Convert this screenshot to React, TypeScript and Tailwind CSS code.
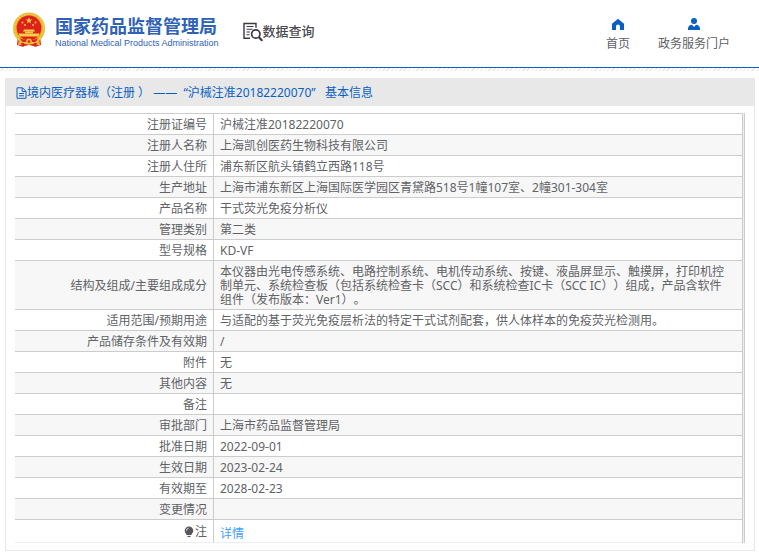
import type { ReactNode } from "react";

type Row = {
  label: ReactNode;
  value?: ReactNode;
};

const rows: Row[] = [
  { label: "注册证编号", value: "沪械注准20182220070" },
  { label: "注册人名称", value: "上海凯创医药生物科技有限公司" },
  { label: "注册人住所", value: "浦东新区航头镇鹤立西路118号" },
  {
    label: "生产地址",
    value: "上海市浦东新区上海国际医学园区青黛路518号1幢107室、2幢301-304室",
  },
  { label: "产品名称", value: "干式荧光免疫分析仪" },
  { label: "管理类别", value: "第二类" },
  { label: "型号规格", value: "KD-VF" },
  {
    label: "结构及组成/主要组成成分",
    value:
      "本仪器由光电传感系统、电路控制系统、电机传动系统、按键、液晶屏显示、触摸屏，打印机控制单元、系统检查板（包括系统检查卡（SCC）和系统检查IC卡（SCC IC））组成，产品含软件组件（发布版本：Ver1）。",
  },
  {
    label: "适用范围/预期用途",
    value: "与适配的基于荧光免疫层析法的特定干式试剂配套，供人体样本的免疫荧光检测用。",
  },
  { label: "产品储存条件及有效期", value: "/" },
  { label: "附件", value: "无" },
  { label: "其他内容", value: "无" },
  { label: "备注" },
  { label: "审批部门", value: "上海市药品监督管理局" },
  { label: "批准日期", value: "2022-09-01" },
  { label: "生效日期", value: "2023-02-24" },
  { label: "有效期至", value: "2028-02-23" },
  { label: "变更情况" },
];

function Emblem() {
  return (
    <svg viewBox="0 0 34 36" className="h-9 w-[34px] shrink-0" aria-hidden="true">
      <path d="M6 24 L5 33 L10 34.500 L17 33 L24 34.500 L29 33 L28 24 Z" fill="#d9241c" />
      <circle cx="17" cy="16.5" r="16" fill="#eab530" />
      <circle cx="17" cy="16.5" r="14.6" fill="none" stroke="#f4cb4e" strokeWidth="1.4" strokeDasharray="2 1" />
      <circle cx="17" cy="16" r="12.4" fill="#df211c" />
      <path d="M17 5.2l.9 2.3 2.4.1-1.9 1.5.7 2.4-2.1-1.4-2.1 1.4.7-2.4-1.9-1.5 2.4-.1z" fill="#f8d048" />
      <g fill="#f8d048">
        <circle cx="10.5" cy="10.5" r="0.9" />
        <circle cx="13" cy="13" r="0.9" />
        <circle cx="21" cy="13" r="0.9" />
        <circle cx="23.5" cy="10.5" r="0.9" />
        <path d="M12 17.5h10l1 2H11z" />
        <path d="M13 19.5h8v1.8h-8z" />
        <path d="M6.5 21.5h21l-1.2 3H7.7z" />
      </g>
      <path d="M8 26c5 3 13 3 18 0l-2 4H10z" fill="#df211c" />
      <circle cx="17" cy="29.5" r="3" fill="#eab530" />
      <circle cx="17" cy="29.5" r="1.2" fill="#df211c" />
      <path d="M7 27l4 3-1 3-4 0zM27 27l-4 3 1 3 4 0z" fill="#eab530" />
      <path d="M9 31l3 0 0 3.5-2 0zM22 31l3 0-1 3.5-2 0z" fill="#df211c" />
    </svg>
  );
}

function QueryIcon() {
  return (
    <svg viewBox="0 0 20 20" className="h-5 w-5 shrink-0" fill="none" stroke="#3b3847" aria-hidden="true">
      <path d="M7 16.3H1V1.500h12v4.300" strokeWidth="1.4" />
      <path d="M3.5 4.500h7M3.5 7.300h6M3.5 10h3.500M3.5 12.800h3" strokeWidth="1.1" />
      <circle cx="12.8" cy="12" r="4.2" strokeWidth="1.7" />
      <path d="M15.9 15.2l3.4 3.6" strokeWidth="2.2" />
    </svg>
  );
}

function HomeIcon() {
  return (
    <svg viewBox="0 0 12 12" className="h-3 w-3" fill="#0a5fc4" aria-hidden="true">
      <path d="M6 .8L0 5.800V12h4V8.500a2 2 0 0 1 4 0V12h4V5.800z" />
    </svg>
  );
}

function UserIcon() {
  return (
    <svg viewBox="0 0 12 12" className="h-3 w-3" fill="#0a5fc4" aria-hidden="true">
      <circle cx="6" cy="3" r="3" />
      <path d="M0 12V10.4C.3 8 2 7 4 6.8L6 9l2-2.2c2 .2 3.7 1.2 4 3.6V12z" />
    </svg>
  );
}

function DocIcon() {
  return (
    <svg viewBox="0 0 11 12" className="h-3 w-[11px] shrink-0" fill="none" stroke="#0a5fc4" aria-hidden="true">
      <path d="M1 .8h5.5l3.5 3.5v7H1zM6.200 1v3.500H10M3 6.500h5M3 8.800h5" />
    </svg>
  );
}

function BulbIcon() {
  return (
    <svg viewBox="0 0 10 12" className="h-3 w-2.5" aria-hidden="true">
      <path d="M5 .5a4.3 4.3 0 0 1 4.3 4.3c0 2-1.5 2.9-2 4.200H2.700c-.5-1.300-2-2.200-2-4.200A4.300 4.300 0 0 1 5 .5z" fill="#55575c" />
      <path d="M3.500 10.500h3" stroke="#55575c" strokeWidth="1.200" />
      <path d="M2.400 4.700A2.600 2.600 0 0 1 4.600 2.200" stroke="#fff" strokeWidth=".8" fill="none" />
    </svg>
  );
}

export default function App() {
  return (
    <div className="bg-white font-['Noto_Sans','Noto_Sans_CJK_SC',sans-serif] text-xs text-[#606266] [text-spacing-trim:space-all]">
      <header className="flex h-[68px] items-start justify-between border-b border-[#0a5fc4] pr-[29px] pl-3">
        <div className="flex">
          <a href="#" className="flex pt-3">
            <Emblem />
            <span className="ml-[9px] flex flex-col pt-1 text-[#2f62b5]">
              <span className="text-[18px] leading-5 font-bold whitespace-nowrap">国家药品监督管理局</span>
              <span className="font-['Liberation_Sans',sans-serif] text-[9px] leading-[14px] whitespace-nowrap">
                National Medical Products Administration
              </span>
            </span>
          </a>
          <h1 className="ml-6 flex pt-[22px] text-[#4b4b50]">
            <QueryIcon />
            <span className="text-[13px] leading-[18px] font-medium whitespace-nowrap">数据查询</span>
          </h1>
        </div>
        <nav className="flex gap-7 pt-[18px]">
          <a href="#" className="flex flex-col items-center gap-[7px]">
            <HomeIcon />
            <span className="leading-[14px]">首页</span>
          </a>
          <a href="#" className="flex flex-col items-center gap-[7px]">
            <UserIcon />
            <span className="leading-[14px]">政务服务门户</span>
          </a>
        </nav>
      </header>
      <div className="h-[3px] bg-[repeating-linear-gradient(135deg,#ffffff_0px,#ffffff_2px,#e8e8e8_2px,#e8e8e8_3px)]" />

      <main className="mt-[7px] mr-1 ml-[5px] border border-[#e8e8e8]">
        <h2 className="flex h-[27px] items-center bg-[#e8e8e8] pl-2.5 text-[#0a5fc4]">
          <DocIcon />
          <span className="whitespace-pre">境内医疗器械（注册 ） ——  “沪械注准20182220070”   基本信息</span>
        </h2>
        <div className="px-[9px] py-[7px]">
          <div className="border-r border-[#cccccc] bg-[#ebeef5] pr-px">
            <table className="w-full table-fixed border-separate border-spacing-0 border-t border-r border-[#cccccc] bg-white leading-[14px]">
              <colgroup>
                <col className="w-[199px]" />
                <col />
              </colgroup>
              <tbody>
                {rows.map((row, i) => (
                  <tr key={i} className="even:bg-[#f7f7f7]">
                    <th scope="row" className="border-r border-b border-[#cccccc] pt-1 pr-1.5 pb-0.5 text-right font-normal">
                      {row.label}
                    </th>
                    <td className="border-b border-[#cccccc] pt-1 pr-3.5 pb-0.5 pl-1.5">{row.value}</td>
                  </tr>
                ))}
                <tr>
                  <th scope="row" className="h-[23px] border-r border-b border-r-[#cccccc] border-b-[#ebeef5] pt-0.5 pr-1.5 font-normal">
                    <span className="flex items-center justify-end gap-px">
                      <BulbIcon />注
                    </span>
                  </th>
                  <td className="border-b border-[#ebeef5] pt-1.5 pl-1.5">
                    <a href="#" className="text-[#409eff]">详情</a>
                  </td>
                </tr>
              </tbody>
            </table>
          </div>
        </div>
      </main>
    </div>
  );
}
